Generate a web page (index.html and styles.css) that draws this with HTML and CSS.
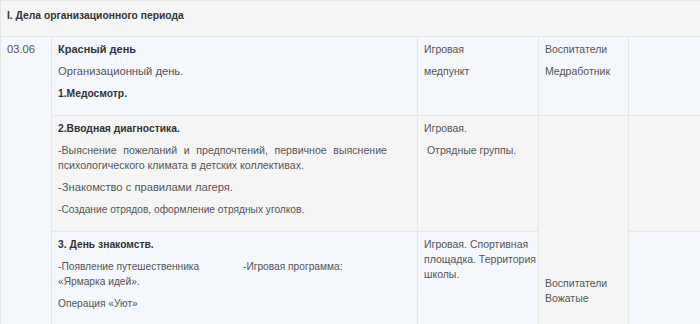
FILE: index.html
```html
<!DOCTYPE html>
<html lang="ru">
<head>
<meta charset="utf-8">
<title>Дела организационного периода</title>
<link rel="stylesheet" href="styles.css">
</head>
<body>
<table class="plan">
  <colgroup>
    <col class="c-date">
    <col class="c-main">
    <col class="c-place">
    <col class="c-resp">
    <col class="c-extra">
  </colgroup>
  <tbody>
    <tr class="row-head">
      <td colspan="5"><p><strong>I. Дела организационного периода</strong></p></td>
    </tr>
    <tr class="row-blue">
      <td rowspan="3"><p>03.06</p></td>
      <td class="main">
        <p><strong class="title">Красный день</strong></p>
        <p>Организационный день.</p>
        <p><strong>1.Медосмотр.</strong></p>
      </td>
      <td class="small"><p>Игровая</p><p>медпункт</p></td>
      <td class="small"><p>Воспитатели</p><p>Медработник</p></td>
      <td></td>
    </tr>
    <tr class="row-grey">
      <td class="main">
        <p><strong>2.Вводная диагностика.</strong></p>
        <p class="md justify">-Выяснение пожеланий и предпочтений, первичное выяснение психологического климата в детских коллективах.</p>
        <p>-Знакомство с правилами лагеря.</p>
        <p class="sm">-Создание отрядов, оформление отрядных уголков.</p>
      </td>
      <td class="small"><p>Игровая.</p><p>&nbsp;Отрядные группы.</p></td>
      <td rowspan="2" class="small cell-bottom"><p>Воспитатели<br>Вожатые</p></td>
      <td></td>
    </tr>
    <tr class="row-blue">
      <td class="main">
        <p><strong>3. День знакомств.</strong></p>
        <p class="sm"><span class="tab">-Появление путешественника</span>-Игровая программа:<br>«Ярмарка идей».</p>
        <p class="sm">Операция «Уют»</p>
      </td>
      <td class="small"><p class="nowrap">Игровая. Спортивная<br>площадка. Территория<br>школы.</p></td>
      <td></td>
    </tr>
  </tbody>
</table>
</body>
</html>
```

FILE: styles.css
```css
body {
  margin: 0;
  font-family: "Liberation Sans", Arial, sans-serif;
  font-size: 11.2px;
  color: #555;
  background: #fff;
}

.plan {
  border-collapse: collapse;
  table-layout: fixed;
  width: 702px;
}

.c-date { width: 51px; }
.c-main { width: 366px; }
.c-place { width: 121px; }
.c-resp { width: 90px; }
.c-extra { width: 74px; }

.plan td {
  border: 1px solid #e6e6e6;
  padding: 5px 6px 7px;
  vertical-align: top;
  line-height: 15px;
}

.plan td.main {
  padding-right: 30px;
}

.plan td.small {
  font-size: 10.5px;
}

.plan p {
  margin: 0 0 7px;
}

.plan p.sm {
  font-size: 10.2px;
}

.plan p.md {
  font-size: 10.6px;
}

.plan p.justify {
  text-align: justify;
}

.plan strong {
  color: #333;
  font-weight: bold;
  font-size: 10.3px;
}

.plan strong.title {
  font-size: 11px;
}

.row-head td {
  background: #f5f5f5;
  padding: 7px 6px 6px;
}

.row-blue td {
  background: #f4f7fb;
}

.row-grey td {
  background: #f5f5f5;
}

.plan td.cell-bottom {
  vertical-align: bottom;
  padding-bottom: 12px;
}

.tab {
  display: inline-block;
  width: 185px;
}

.nowrap {
  white-space: nowrap;
}
```
